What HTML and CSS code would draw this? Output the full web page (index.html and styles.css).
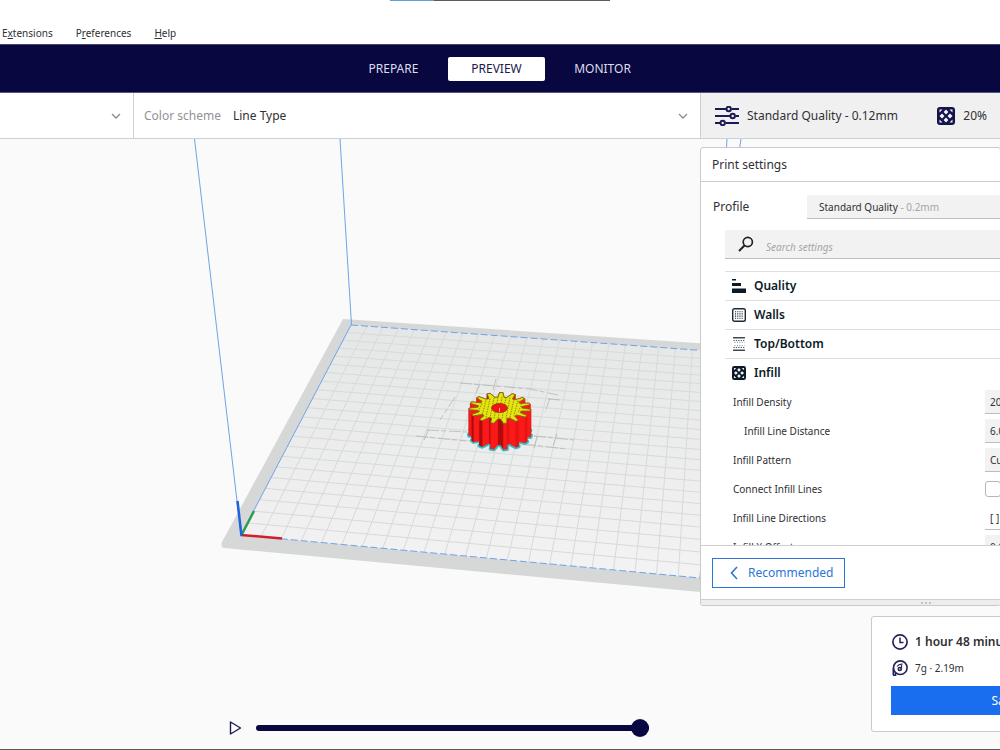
FILE: index.html
```html
<!DOCTYPE html>
<html lang="en">
<head>
<meta charset="utf-8">
<title>Slicer preview</title>
<link rel="stylesheet" href="styles.css">
</head>
<body>
<svg class="defs" aria-hidden="true">
  <symbol id="chevron" viewBox="0 0 10 10"><path d="M1 3l4 4 4-4" fill="none" stroke="#8b8b90" stroke-width="1.3"/></symbol>
  <symbol id="infill" viewBox="0 0 18 18">
    <rect width="18" height="18" rx="3" fill="currentColor"/>
    <g fill="#f4f4f8">
      <path d="M9 2.500L11.400 5 9 7.500 6.600 5zM9 10.500l2.400 2.500L9 15.500 6.600 13zM5 6.600L7.500 9 5 11.400 2.500 9zM13 6.600L15.500 9 13 11.400 10.500 9z"/>
      <path d="M2.500 2.500h3L2.500 5.500zM15.500 2.500v3L12.500 2.500zM2.500 15.500v-3L5.500 15.500zM15.500 15.500h-3l3-3z"/>
    </g>
  </symbol>
</svg>
<div class="app">
  <nav class="menu" aria-label="Main menu">
    <span class="strip"></span>
    <button class="menu-item">E<u>x</u>tensions</button>
    <button class="menu-item">P<u>r</u>eferences</button>
    <button class="menu-item"><u>H</u>elp</button>
  </nav>
  <header class="stages">
    <button class="stage-tab">PREPARE</button>
    <button class="stage-tab active">PREVIEW</button>
    <button class="stage-tab">MONITOR</button>
  </header>
  <div class="toolbar">
    <button class="tool view-type" aria-label="View type"><svg class="chev"><use href="#chevron"/></svg></button>
    <button class="tool scheme"><span class="muted">Color scheme</span><span>Line Type</span><svg class="chev"><use href="#chevron"/></svg></button>
    <button class="tool summary">
      <svg class="sliders" viewBox="0 0 24 20" fill="none" stroke="#1b1a55" stroke-width="2">
        <path d="M0 3h11M16.500 3H24M0 10h15M20.500 10H24M0 17h5M10.500 17H24"/>
        <circle cx="13.700" cy="3" r="2.200"/><circle cx="17.700" cy="10" r="2.200"/><circle cx="7.700" cy="17" r="2.200"/>
      </svg>
      <span class="quality">Standard Quality - 0.12mm</span>
      <svg class="infill-big"><use href="#infill"/></svg>
      <span>20%</span>
    </button>
  </div>
  <main class="viewport">
    <svg class="scene" viewBox="0 139 1000 610" preserveAspectRatio="xMinYMin slice" role="img" aria-label="Build plate with a sliced gear">
      <defs><linearGradient id="bed" x1="0" y1="0" x2="0" y2="1"><stop offset="0" stop-color="#e5e6e6"/><stop offset="1" stop-color="#f3f3f3"/></linearGradient></defs>
      <path d="M343 319L740 346V596L700 592 224 548Q220 547 222 542z" fill="#d6d7d7"/>
      <path d="M241 535L351 325 709 351 700 578z" fill="url(#bed)"/>
      <g id="grid" fill="none" stroke="#d8d9d9"></g>
      <g fill="none" stroke="#aeb0b0" stroke-width=".7" stroke-dasharray="12 2 5 3">
        <path d="M460 383l70 6 28 6M455 397l-15 23M416 436l50 5M427 430l40 2M424 440l5-11M534 436l40 4M524 444l42 5M550 398l-5 14M548 399l12 1M496 379l-3 11M534 448l4-13M557 434l-4 12M480 384l-4 9"/>
      </g>
      <g fill="none" stroke="#6fa3ea">
        <path d="M194.500 139L241 535M340 139L351.500 325M241 535L351 325M727 139L700 578M741 139L709 351"/>
        <path d="M351 325L709 351M241 535L700 578" stroke-dasharray="7 3"/>
      </g>
      <g fill="none" stroke-width="2.500">
        <path d="M241.500 535L254 511" stroke="#2c9c4b"/><path d="M241 535L282 538.500" stroke="#cf2029"/><path d="M241.500 536L237.500 501" stroke="#1d63dc"/>
      </g>
      <g id="gear"></g>
    </svg>

    <section class="panel">
      <h2 class="panel-title">Print settings</h2>
      <div class="profile">
        <label for="profile">Profile</label>
        <button id="profile" class="profile-box">Standard Quality<span class="pale"> - 0.2mm</span></button>
      </div>
      <div class="search">
        <svg viewBox="0 0 16 16" fill="none" stroke="#222"><circle cx="9.800" cy="6" r="4.600" stroke-width="1.700"/><path d="M6.500 9.500L1 15" stroke-width="2"/></svg>
        <input type="search" placeholder="Search settings" aria-label="Search settings">
      </div>
      <div class="settings">
        <button class="cat"><svg viewBox="0 0 14 14" fill="#0b1a26"><path d="M0 0h4v1.500H0zM0 4h9v3H0zM0 9.500h14V14H0z"/></svg>Quality</button>
        <button class="cat"><svg viewBox="0 0 14 14" fill="none" stroke="#1d2b38"><rect x=".700" y=".700" width="12.600" height="12.600" rx="1.800" stroke-width="1.400"/><path d="M3 3.700h8.500M3 5.900h8.500M3 8.100h8.500M3 10.300h8.500" stroke-width="1.100" stroke-dasharray="1.100 1.100"/></svg>Walls</button>
        <button class="cat"><svg viewBox="0 0 14 14" fill="none" stroke="#3f4a54"><path d="M1 .800h12M1 13.200h12" stroke-width="1.500"/><path d="M1.500 3.500h12M1.500 10.500h12" stroke-width="1.200" stroke-dasharray="1.200 1.200"/><path d="M2.500 5.300h10M2.500 8.700h10" stroke-width=".700" stroke-dasharray="1 1.400"/></svg>Top/Bottom</button>
        <button class="cat"><svg><use href="#infill"/></svg>Infill</button>
        <div class="row"><label for="density">Infill Density</label><input id="density" type="text" value="20.0"></div>
        <div class="row child"><label for="distance">Infill Line Distance</label><input id="distance" type="text" value="6.0"></div>
        <div class="row"><label for="pattern">Infill Pattern</label><select id="pattern"><option>Cubic</option></select></div>
        <div class="row"><label for="connect">Connect Infill Lines</label><input id="connect" type="checkbox"></div>
        <div class="row"><label for="dirs">Infill Line Directions</label><input id="dirs" class="plain" type="text" value="[ ]"></div>
        <div class="row"><label for="xoff">Infill X Offset</label><input id="xoff" type="text" value="0.0"></div>
      </div>
      <footer class="panel-foot">
        <button class="recommended"><svg viewBox="0 0 8 14"><path d="M7 1L1.500 7 7 13" fill="none" stroke="#2b75d8" stroke-width="1.600"/></svg>Recommended</button>
      </footer>
      <div class="grip"><i></i><i></i><i></i></div>
    </section>

    <section class="job">
      <div class="job-line time"><svg viewBox="0 0 16 16" fill="none" stroke="#25235a"><circle cx="8" cy="8" r="7.100" stroke-width="1.700"/><path d="M8 3.500V8.500h3.500" stroke-width="1.500"/></svg>1 hour 48 minutes</div>
      <div class="job-line"><svg viewBox="0 0 16 16" fill="none" stroke="#25235a" stroke-width="1.600"><circle cx="8.300" cy="7.700" r="6.800"/><path d="M1.300 8v7.300M1 15.200h2.500V12"/><circle cx="7.800" cy="9" r="1.500"/><path d="M5 6.500Q7 3.800 10.500 4.200M9.500 8.500V5" stroke-width="1.200"/></svg>7g · 2.19m</div>
      <button class="save">Save to Disk</button>
    </section>

    <div class="player">
      <button class="play" aria-label="Play"><svg viewBox="0 0 12 14"><path d="M1 1l10 6-10 6z" fill="#fff" stroke="#1b1a55" stroke-width="1.400" stroke-linejoin="round"/></svg></button>
      <input class="track" type="range" min="0" max="100" value="100" aria-label="Simulation position">
    </div>
  </main>
  <div class="edge"></div>
</div>
<script src="scene.js"></script>
</body>
</html>
```
FILE: styles.css
```css
* { box-sizing: border-box; }
body { margin: 0; font: 12px/16px "Noto Sans", sans-serif; color: #303034; background: #fff; }
button, input, select { font: inherit; color: inherit; border: 0; border-radius: 0; background: none; padding: 0; margin: 0; outline: 0; }
.defs { position: absolute; width: 0; height: 0; }
.app { display: flex; flex-direction: column; height: 100vh; overflow: hidden; }

.menu { position: relative; flex: none; height: 44px; display: flex; align-items: flex-end; gap: 23px; padding: 0 2px 3px; font-size: 10px; }
.menu-item { line-height: 16px; }
.menu u { text-underline-offset: 1px; }
.strip { position: absolute; top: 0; left: 39%; width: 22%; height: 1px; background: linear-gradient(90deg, #5ea0d8 20%, #5c5c5c 20%); }

.stages { flex: none; height: 49px; display: flex; justify-content: center; align-items: center; gap: 6px; padding: 1px 4px 0 0; background: #08073f; border-top: 1px solid #45446c; border-bottom: 1px solid #55547a; }
.stage-tab { width: 97px; height: 24px; color: #dcdcec; border-radius: 2px; }
.stage-tab.active { margin-right: 3px; background: #fff; color: #1b1a4c; }

.toolbar { flex: none; height: 46px; display: grid; grid-template-columns: 133px 1fr 300px; border-bottom: 1px solid #cfcfd1; }
.tool { display: flex; align-items: center; text-align: left; }
.tool + .tool { border-left: 1px solid #cfcfd1; }
.chev { width: 10px; height: 10px; margin-left: auto; }
.view-type { padding-right: 12px; }
.scheme { padding: 0 12px 0 10px; gap: 12px; }
.muted { color: #929296; }
.summary { background: #f0f0f0; padding-left: 14px; }
.sliders { width: 24px; height: 20px; margin-right: 8px; }
.quality { margin-right: auto; }
.infill-big { width: 18px; height: 18px; margin-right: 8px; color: #14134a; }
.summary span:last-child { margin-right: 13px; }

.viewport { position: relative; flex: 1; min-height: 0; overflow: hidden; background: #fafafa; }
.scene { position: absolute; inset: 0; width: 100%; height: 100%; }
.edge { flex: none; height: 1px; background: #5a5a58; }

.panel { position: absolute; top: 8px; right: -1px; width: 301px; background: #fff; border: 1px solid #cacacc; border-radius: 3px; overflow: hidden; }
.panel-title { margin: 0; padding: 9px 11px 8px; font-size: 12px; font-weight: 400; line-height: 16px; border-bottom: 1px solid #cfcfd1; }
.profile { display: flex; align-items: center; justify-content: space-between; margin-top: 13px; padding-left: 12px; }
.profile-box { width: 193px; height: 24px; padding-left: 12px; text-align: left; font-size: 10px; background: #f2f2f2; border-bottom: 1px solid #bdbdbf; }
.pale { color: #a5a5a8; }
.search { display: flex; align-items: center; gap: 12px; height: 29px; margin: 11px 0 12px 24px; padding-left: 13px; background: #f2f2f2; border-bottom: 1px solid #bdbdbf; }
.search svg { width: 16px; height: 16px; }
.search input { flex: 1; min-width: 0; padding-top: 5px; font-size: 10px; font-style: italic; }
.search input::placeholder { color: #a5a5a8; opacity: 1; }

.settings { height: 274px; margin-left: 24px; overflow: hidden; }
.cat { display: flex; align-items: center; gap: 8px; width: 100%; height: 29px; padding-left: 7px; border-top: 1px solid #dedfe0; font-weight: 600; color: #0b1a26; }
.cat svg { width: 14px; height: 14px; }
.row { display: flex; align-items: center; justify-content: space-between; height: 29px; padding: 1px 0 0 8px; font-size: 10px; }
.row.child { padding-left: 19px; }
.row input, .row select { width: 15px; height: 24px; padding-left: 5px; background: #f2f2f2; border-bottom: 1px solid #bdbdbf; appearance: none; }
.row input.plain { background: #fff; }
.row input[type="checkbox"] { width: 16px; height: 16px; margin-right: -1px; padding: 0; background: #fff; border: 1px solid #b5b5b8; border-radius: 3px; }

.panel-foot { padding: 12px 11px 11px; border-top: 1px solid #cfcfd1; }
.recommended { display: flex; align-items: center; gap: 10px; height: 30px; padding: 0 11px 0 17px; border: 1px solid #2b75d8; color: #2b75d8; }
.recommended svg { width: 8px; height: 14px; }
.grip { display: flex; justify-content: center; align-items: center; gap: 2px; height: 6px; padding-left: 150px; background: #ededed; border-top: 1px solid #cfcfd1; }
.grip i { width: 2px; height: 2px; background: #c4c4c6; }

.job { position: absolute; right: -180px; bottom: 17px; width: 309px; height: 116px; padding: 17px 19px 0 19px; background: #fff; border: 1px solid #c9cacc; border-radius: 3px; }
.job-line { display: flex; align-items: center; gap: 7px; height: 16px; margin-bottom: 10px; padding-left: 1px; font-size: 10px; }
.job-line svg { width: 16px; height: 16px; }
.time { font-size: 12px; font-weight: 600; }
.save { width: 100%; height: 29px; background: #196ef0; color: #fff; }

.player { position: absolute; left: 229px; bottom: 12px; display: flex; align-items: center; gap: 14px; }
.play, .play svg { display: block; width: 13px; height: 14px; }
.track { appearance: none; width: 393px; height: 18px; }
.track::-webkit-slider-runnable-track { height: 6px; border-radius: 3px; background: #08073f; }
.track::-webkit-slider-thumb { appearance: none; width: 18px; height: 18px; margin-top: -6px; border-radius: 50%; background: #08073f; }
```
FILE: scene.js
```js
(() => {
  // Build plate corners: front-left, front-right, back-right, back-left.
  const p0 = [241, 535], p1 = [700, 578], p2 = [709, 351], p3 = [351, 325];
  const CELLS = 22;

  // Unit square to plate quad.
  const sx = p0[0] - p1[0] + p2[0] - p3[0], sy = p0[1] - p1[1] + p2[1] - p3[1];
  const dx1 = p1[0] - p2[0], dx2 = p3[0] - p2[0], dy1 = p1[1] - p2[1], dy2 = p3[1] - p2[1];
  const den = dx1 * dy2 - dx2 * dy1;
  const g = (sx * dy2 - dx2 * sy) / den, h = (dx1 * sy - sx * dy1) / den;
  function project(u, v) {
    const w = g * u + h * v + 1;
    return [0, 1].map(k => (
      ((p1[k] - p0[k] + g * p1[k]) * u + (p3[k] - p0[k] + h * p3[k]) * v + p0[k]) / w
    ).toFixed(1)).join(' ');
  }
  let d = '';
  for (let i = 1; i < CELLS; i++) {
    const t = i / CELLS;
    d += `M${project(t, 0)}L${project(t, 1)}M${project(0, t)}L${project(1, t)}`;
  }
  document.getElementById('grid').innerHTML = `<path d="${d}"/>`;

  // Gear: toothed outline extruded downwards.
  const TEETH = 15, cx = 500, cy = 408, H = 26;
  const rim = [];
  for (let i = 0; i < TEETH; i++) {
    for (const [o, r] of [[-0.34, 22], [-0.13, 31], [0.13, 31], [0.34, 22]]) {
      const a = -Math.PI / 2 + 0.04 + (i + o) * 2 * Math.PI / TEETH;
      rim.push([cx + r * Math.cos(a), cy + r * 0.5 * Math.sin(a)]);
    }
  }
  const pts = (dy) => rim.map(p => `${p[0].toFixed(1)},${(p[1] + dy).toFixed(1)}`).join(' ');
  let out = `<polygon points="${pts(H)}" fill="#f00" stroke="#2fc4cc" stroke-width="4" stroke-linejoin="round"/>`;
  const quads = rim.map((a, i) => [a, rim[(i + 1) % rim.length]]);
  quads.sort((m, n) => (m[0][1] + m[1][1]) - (n[0][1] + n[1][1]));
  for (const [a, b] of quads) {
    const wide = Math.abs(b[0] - a[0]);
    const tone = wide > 3 ? '#fb1a1a' : b[1] > a[1] ? '#e61414' : '#b00c0c';
    out += `<polygon points="${a} ${b} ${b[0]},${b[1] + H} ${a[0]},${a[1] + H}" fill="${tone}" stroke="${tone}" stroke-width=".5"/>`;
  }
  out += `<polygon points="${pts(0)}" fill="#e4e412" stroke="#7d6a08" stroke-width=".9"/>`;
  let tex = '';
  for (let x = -20; x <= 20; x += 4) {
    const y = 11 * Math.sqrt(1 - x * x / 484);
    tex += `M${cx + x + 2} ${cy - y}L${cx + x - 2} ${cy + y}`;
  }
  out += `<path d="${tex}" fill="none" stroke="#85820a" stroke-width=".9" stroke-dasharray="1.500 1"/>`;
  out += '<ellipse cx="499.500" cy="408" rx="8" ry="4.500" fill="#f01414" stroke="#8d3a08" stroke-width=".8"/><path d="M499.500 408v4" stroke="#fbb" stroke-width=".8"/>';
  document.getElementById('gear').innerHTML = out;
})();
```
